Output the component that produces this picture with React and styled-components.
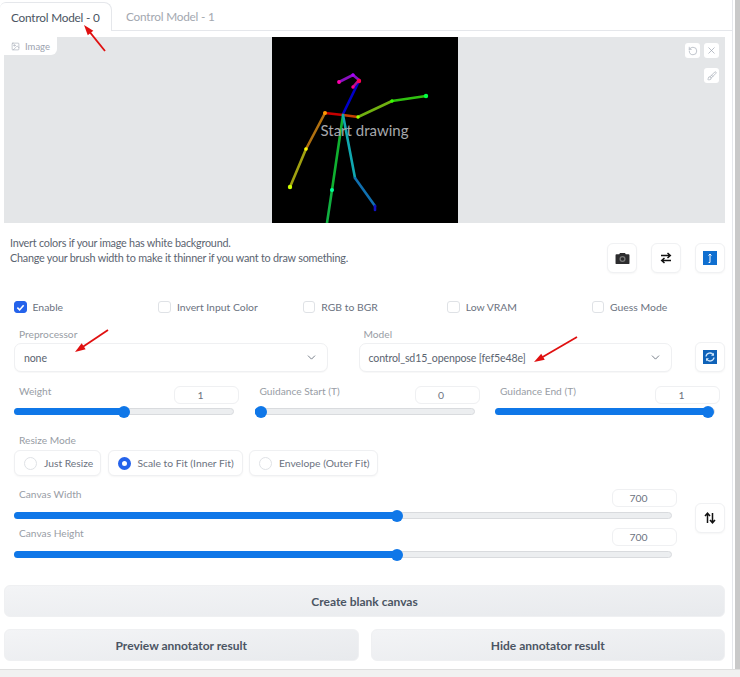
import React from "react";
import styled, { createGlobalStyle } from "styled-components";
import { ChevronDown, Image as ImageIcon, RotateCcw, X, Brush } from "lucide-react";

const GlobalStyle = createGlobalStyle`
  html, body {
    margin: 0;
    padding: 0;
    background: #fff;
    font-family: "Lato", "Noto Sans", sans-serif;
  }
  * { box-sizing: border-box; }
`;

const Page = styled.div`
  position: relative;
  width: 740px;
  height: 677px;
  overflow: hidden;
  display: flex;
  flex-direction: column;
`;

const Window = styled.div`
  display: flex;
  height: 669px;
`;

const Main = styled.div`
  width: 733px;
  border-right: 1px solid #e5e7eb;
`;

const Scrollbar = styled.div`
  flex: 1;
  margin-left: 2px;
  background: #c9c9c9;
`;

const Footer = styled.div`
  flex: 1;
  background: #f1f1f1;
  border-top: 1px solid #dfdfdf;
`;

const TabBar = styled.div`
  display: flex;
  height: 31px;
  padding-top: 2px;
  border-bottom: 1px solid #e5e7eb;
`;

const Tab = styled.div`
  height: 28px;
  padding-left: 14px;
  display: flex;
  align-items: center;
  font-size: 11.8px;
  letter-spacing: -0.2px;
  color: #a3a8b0;
`;

const ActiveTab = styled(Tab)`
  width: 112px;
  height: 29px;
  padding-left: 11px;
  color: #4b5563;
  background: #fff;
  border: 1px solid #e5e7eb;
  border-left: none;
  border-bottom: none;
  border-radius: 6px 8px 0 0;
`;

const Body = styled.div`
  padding: 6px 7px 0 4px;
`;

const ImagePanel = styled.div`
  position: relative;
  height: 186px;
  background: #e4e6e8;
  display: flex;
  justify-content: center;
`;

const ImageLabel = styled.div`
  position: absolute;
  top: 0;
  left: 0;
  width: 53px;
  height: 18px;
  padding-left: 7px;
  display: flex;
  align-items: center;
  gap: 5px;
  background: #fff;
  border-bottom-right-radius: 6px;
  font-size: 9.5px;
  color: #9ca3af;
`;

const Canvas = styled.div`
  position: relative;
  width: 186px;
  height: 186px;
  background: #000;
  svg { display: block; }
`;

const StartDrawing = styled.div`
  position: absolute;
  top: 83px;
  left: 0;
  right: 0;
  text-align: center;
  font-size: 15px;
  line-height: 20px;
  color: #a6a8ac;
`;

const MiniButton = styled.button`
  position: absolute;
  top: ${(p) => p.$top}px;
  right: ${(p) => p.$right}px;
  width: 15px;
  height: 15px;
  padding: 0;
  display: flex;
  align-items: center;
  justify-content: center;
  background: #fff;
  border: none;
  border-radius: 3px;
  color: #9ca3af;
`;

const HintRow = styled.div`
  display: flex;
  justify-content: space-between;
  margin-top: 12px;
  padding-left: 6px;
`;

const Hint = styled.div`
  font-size: 10.8px;
  letter-spacing: -0.22px;
  line-height: 15px;
  color: #5b6470;
`;

const ToolButtons = styled.div`
  display: flex;
  gap: 14px;
  margin-top: 8px;
`;

const ToolButton = styled.button`
  width: 30px;
  height: 30px;
  padding: 0;
  display: flex;
  align-items: center;
  justify-content: center;
  background: #fff;
  border: 1px solid #f0f1f3;
  border-radius: 6px;
  box-shadow: 0 1px 2px rgba(0, 0, 0, 0.04);
`;

const SwapButton = styled(ToolButton)`
  margin-bottom: 12px;
`;

const CheckRow = styled.div`
  display: grid;
  grid-template-columns: repeat(5, 144.4px);
  height: 14px;
  margin-top: 27px;
  padding-left: 10px;
`;

const CheckItem = styled.label`
  display: flex;
  align-items: center;
  gap: 6px;
  font-size: 10.4px;
  color: #6b7280;
`;

const CheckBox = styled.span`
  width: 12.5px;
  height: 12.5px;
  display: flex;
  align-items: center;
  justify-content: center;
  border-radius: 3px;
  background: ${(p) => (p.$on ? "#2563eb" : "#fff")};
  border: 1px solid ${(p) => (p.$on ? "#2563eb" : "#dfe2e6")};
`;

const FieldLabel = styled.div`
  padding-left: 5px;
  font-size: 10.2px;
  line-height: 14px;
  color: #989da5;
`;

const SelectRow = styled.div`
  display: flex;
  align-items: flex-end;
  margin-top: 13px;
  padding-left: 10px;
`;

const SelectField = styled.div`
  width: 313.5px;
  margin-right: ${(p) => p.$gap}px;
`;

const Select = styled.div`
  height: 29px;
  margin-top: 2px;
  padding: 0 9px 0 9px;
  display: flex;
  align-items: center;
  justify-content: space-between;
  font-size: 10.6px;
  letter-spacing: -0.15px;
  color: #5b6470;
  background: #fff;
  border: 1px solid #eff0f2;
  border-radius: 7px;
  box-shadow: 0 1px 1px rgba(0, 0, 0, 0.03);
`;

const SliderRow = styled.div`
  display: flex;
  gap: 20.5px;
  margin-top: 14px;
  padding-left: 10px;
`;

const SliderField = styled.div`
  width: ${(p) => p.$width}px;
`;

const SliderHead = styled.div`
  display: flex;
  align-items: flex-start;
  justify-content: space-between;
  height: 19px;
  margin-right: -5px;

  ${FieldLabel} {
    margin-top: -2px;
  }
`;

const NumberBox = styled.div`
  width: 65px;
  height: 18px;
  padding-right: 12px;
  display: flex;
  align-items: center;
  justify-content: center;
  font-size: 10.4px;
  color: #6b7280;
  background: #fff;
  border: 1px solid #eff0f2;
  border-radius: 6px;
`;

const Track = styled.div`
  position: relative;
  height: 7px;
  margin-top: ${(p) => p.$gap}px;
  background: #eceef0;
  border: 1px solid #d9dbde;
  border-radius: 4px;
`;

const Fill = styled.div`
  position: absolute;
  top: -1px;
  left: -1px;
  height: 7px;
  width: ${(p) => p.$value}%;
  background: #0f77e8;
  border-radius: 4px;
`;

const Thumb = styled.div`
  position: absolute;
  top: -3.5px;
  left: ${(p) => p.$value}%;
  width: 12px;
  height: 12px;
  margin-left: -6px;
  background: #0f77e8;
  border-radius: 50%;
`;

const ResizeBlock = styled.div`
  margin-top: 18px;
  padding-left: 10px;
`;

const RadioRow = styled.div`
  display: flex;
  gap: 6.5px;
  margin-top: 3px;
`;

const RadioItem = styled.label`
  width: ${(p) => p.$width}px;
  height: 26px;
  padding-left: 9px;
  display: flex;
  align-items: center;
  gap: 7px;
  font-size: 10.3px;
  color: #6b7280;
  background: #fff;
  border: 1px solid #eff0f2;
  border-radius: 6px;
  box-shadow: 0 1px 2px rgba(0, 0, 0, 0.04);
`;

const RadioDot = styled.span`
  width: 13px;
  height: 13px;
  border-radius: 50%;
  background: #fff;
  border: ${(p) => (p.$on ? "4px solid #2563eb" : "1px solid #dfe2e6")};
`;

const CanvasRow = styled.div`
  display: flex;
  align-items: center;
  margin-top: 13px;
  padding-left: 10px;
`;

const CanvasSliders = styled.div`
  width: 658px;
  margin-right: 23px;
  display: flex;
  flex-direction: column;
  gap: 9px;
`;

const ActionButton = styled.button`
  flex: 1;
  height: 32px;
  padding: 0;
  font-family: inherit;
  font-size: 12px;
  font-weight: 700;
  color: #4b5563;
  background: linear-gradient(to bottom right, #f3f4f6, #e8eaed);
  border: 1px solid #eff0f2;
  border-radius: 6px;
`;

const FullAction = styled.div`
  display: flex;
  margin-top: 27px;
`;

const ActionRow = styled.div`
  display: flex;
  gap: 12px;
  margin-top: 12px;
`;

const Annotations = styled.svg`
  position: absolute;
  top: 0;
  left: 0;
  pointer-events: none;
`;

const Slider = ({ label, value, percent, width, gap = 3 }) => (
  <SliderField $width={width}>
    <SliderHead>
      <FieldLabel>{label}</FieldLabel>
      <NumberBox>{value}</NumberBox>
    </SliderHead>
    <Track $gap={gap}>
      <Fill $value={percent} />
      <Thumb $value={percent} />
    </Track>
  </SliderField>
);

const bones = [
  ["#0000c8", 71, 77, 87, 44],
  ["#b01090", 87, 43, 81, 50],
  ["#8a10c0", 67, 45, 81, 38],
  ["#8a10c0", 81, 38, 87, 43],
  ["#c80000", 53, 76, 71, 78],
  ["#c84000", 71, 78, 86, 80],
  ["#b07010", 53, 76, 34, 112],
  ["#a0a010", 34, 112, 18, 150],
  ["#70b010", 86, 80, 120, 64],
  ["#30c010", 120, 64, 154, 59],
  ["#10b030", 71, 78, 60, 153],
  ["#10b040", 60, 153, 55, 186],
  ["#10a8b0", 71, 78, 83, 141],
  ["#1070b0", 83, 141, 103, 169],
  ["#1010c0", 103, 169, 103, 173],
];

const joints = [
  ["#ff9900", 53, 76, 2],
  ["#ffff00", 34, 112, 1.8],
  ["#ccff00", 18, 150, 2.2],
  ["#99ff00", 86, 80, 1.7],
  ["#33ff00", 120, 64, 1.7],
  ["#00ff44", 154, 59, 2.2],
  ["#00ff99", 60, 153, 2],
  ["#ff00aa", 67, 45, 1.9],
  ["#ff0055", 87, 44, 2.2],
  ["#aa00ff", 81, 38, 1.7],
  ["#ff0088", 81, 50, 1.7],
];

const Skeleton = () => (
  <svg width="186" height="186" viewBox="0 0 186 186">
    {bones.map(([color, x1, y1, x2, y2], i) => (
      <line key={i} x1={x1} y1={y1} x2={x2} y2={y2} stroke={color} strokeWidth="2.6" strokeLinecap="round" />
    ))}
    {joints.map(([color, cx, cy, r], i) => (
      <circle key={i} cx={cx} cy={cy} r={r} fill={color} />
    ))}
  </svg>
);

const CameraIcon = () => (
  <svg width="15" height="13" viewBox="0 0 16 14">
    <path d="M1.5 2.5h3l.8-1.5h5.4l.8 1.5h3a1 1 0 0 1 1 1v8.5a1 1 0 0 1-1 1h-13a1 1 0 0 1-1-1V3.500a1 1 0 0 1 1-1z" fill="#2c2c2e" />
    <circle cx="8" cy="7.500" r="3.300" fill="#777" />
    <circle cx="8" cy="7.500" r="1.900" fill="#2c2c2e" />
  </svg>
);

const SwapIcon = () => (
  <svg width="12" height="12" viewBox="0 0 12 12" fill="none" stroke="#111" strokeWidth="1.500">
    <path d="M1 3.500h9M7.500 1l2.800 2.500L7.500 6" />
    <path d="M11 8.500H2M4.500 6L1.700 8.500 4.500 11" />
  </svg>
);

const UploadIcon = () => (
  <svg width="14" height="14" viewBox="0 0 14 14">
    <rect width="14" height="14" fill="#0f6fd0" />
    <path d="M7 11.500V3M5.500 4.500L7 3l1.500 1.500M5.600 11.500H7" fill="none" stroke="#fff" strokeWidth="1" />
  </svg>
);

const RefreshIcon = () => (
  <svg width="14" height="14" viewBox="0 0 14 14">
    <rect width="14" height="14" fill="#0f62b8" />
    <path d="M3 6.500A4 4 0 0 1 10.300 4.800M11 7.500A4 4 0 0 1 3.700 9.200" fill="none" stroke="#cfe6fb" strokeWidth="1.300" />
    <path d="M11 2.800v3h-3zM3 11.200v-3h3z" fill="#cfe6fb" />
  </svg>
);

const VerticalSwapIcon = () => (
  <svg width="12" height="12" viewBox="0 0 12 12" fill="none" stroke="#111" strokeWidth="1.500">
    <path d="M3.500 11V1.500M1 4l2.500-2.800L6 4" />
    <path d="M8.500 1v9.500M6 8l2.500 2.800L11 8" />
  </svg>
);

const CheckMark = () => (
  <svg width="9" height="9" viewBox="0 0 10 10" fill="none" stroke="#fff" strokeWidth="1.800">
    <path d="M1.500 5.200L4 7.700 8.500 2.500" />
  </svg>
);

const Arrow = ({ x1, y1, x2, y2 }) => {
  const angle = Math.atan2(y2 - y1, x2 - x1);
  const head = (offset) =>
    `${x2 - 11 * Math.cos(angle + offset)},${y2 - 11 * Math.sin(angle + offset)}`;
  return (
    <g>
      <line x1={x1} y1={y1} x2={x2 - 6 * Math.cos(angle)} y2={y2 - 6 * Math.sin(angle)} stroke="#e01010" strokeWidth="1.800" />
      <polygon points={`${x2},${y2} ${head(0.33)} ${head(-0.33)}`} fill="#e01010" />
    </g>
  );
};

const checks = [
  ["Enable", true],
  ["Invert Input Color", false],
  ["RGB to BGR", false],
  ["Low VRAM", false],
  ["Guess Mode", false],
];

const radios = [
  ["Just Resize", 87, false],
  ["Scale to Fit (Inner Fit)", 135, true],
  ["Envelope (Outer Fit)", 129, false],
];

export default function App() {
  return (
    <Page>
      <GlobalStyle />
      <Window>
        <Main>
          <TabBar>
            <ActiveTab>Control Model - 0</ActiveTab>
            <Tab>Control Model - 1</Tab>
          </TabBar>
          <Body>
            <ImagePanel>
              <ImageLabel>
                <ImageIcon size={9} strokeWidth={1.5} />
                Image
              </ImageLabel>
              <Canvas>
                <Skeleton />
                <StartDrawing>Start drawing</StartDrawing>
              </Canvas>
              <MiniButton $top={6} $right={25}>
                <RotateCcw size={10} strokeWidth={1.5} />
              </MiniButton>
              <MiniButton $top={6} $right={6}>
                <X size={11} strokeWidth={1.5} />
              </MiniButton>
              <MiniButton $top={31} $right={6}>
                <Brush size={10} strokeWidth={1.5} />
              </MiniButton>
            </ImagePanel>

            <HintRow>
              <Hint>
                Invert colors if your image has white background.
                <br />
                Change your brush width to make it thinner if you want to draw something.
              </Hint>
              <ToolButtons>
                <ToolButton><CameraIcon /></ToolButton>
                <ToolButton><SwapIcon /></ToolButton>
                <ToolButton><UploadIcon /></ToolButton>
              </ToolButtons>
            </HintRow>

            <CheckRow>
              {checks.map(([label, on]) => (
                <CheckItem key={label}>
                  <CheckBox $on={on}>{on && <CheckMark />}</CheckBox>
                  {label}
                </CheckItem>
              ))}
            </CheckRow>

            <SelectRow>
              <SelectField $gap={31}>
                <FieldLabel>Preprocessor</FieldLabel>
                <Select>
                  none
                  <ChevronDown size={13} strokeWidth={1.5} />
                </Select>
              </SelectField>
              <SelectField $gap={23}>
                <FieldLabel>Model</FieldLabel>
                <Select>
                  control_sd15_openpose [fef5e48e]
                  <ChevronDown size={13} strokeWidth={1.5} />
                </Select>
              </SelectField>
              <ToolButton><RefreshIcon /></ToolButton>
            </SelectRow>

            <SliderRow>
              <Slider label="Weight" value="1" percent={50} width={220} />
              <Slider label="Guidance Start (T)" value="0" percent={2.5} width={220} />
              <Slider label="Guidance End (T)" value="1" percent={97.3} width={220} />
            </SliderRow>

            <ResizeBlock>
              <FieldLabel>Resize Mode</FieldLabel>
              <RadioRow>
                {radios.map(([label, width, on]) => (
                  <RadioItem key={label} $width={width}>
                    <RadioDot $on={on} />
                    {label}
                  </RadioItem>
                ))}
              </RadioRow>
            </ResizeBlock>

            <CanvasRow>
              <CanvasSliders>
                <Slider label="Canvas Width" value="700" percent={58.2} width={658} gap={4} />
                <Slider label="Canvas Height" value="700" percent={58.2} width={658} gap={4} />
              </CanvasSliders>
              <SwapButton><VerticalSwapIcon /></SwapButton>
            </CanvasRow>

            <FullAction>
              <ActionButton>Create blank canvas</ActionButton>
            </FullAction>
            <ActionRow>
              <ActionButton>Preview annotator result</ActionButton>
              <ActionButton>Hide annotator result</ActionButton>
            </ActionRow>
          </Body>
        </Main>
        <Scrollbar />
      </Window>
      <Footer />
      <Annotations width="740" height="677">
        <Arrow x1={105} y1={51} x2={84} y2={25} />
        <Arrow x1={108} y1={330} x2={75} y2={352} />
        <Arrow x1={577} y1={337} x2={534} y2={362} />
      </Annotations>
    </Page>
  );
}
